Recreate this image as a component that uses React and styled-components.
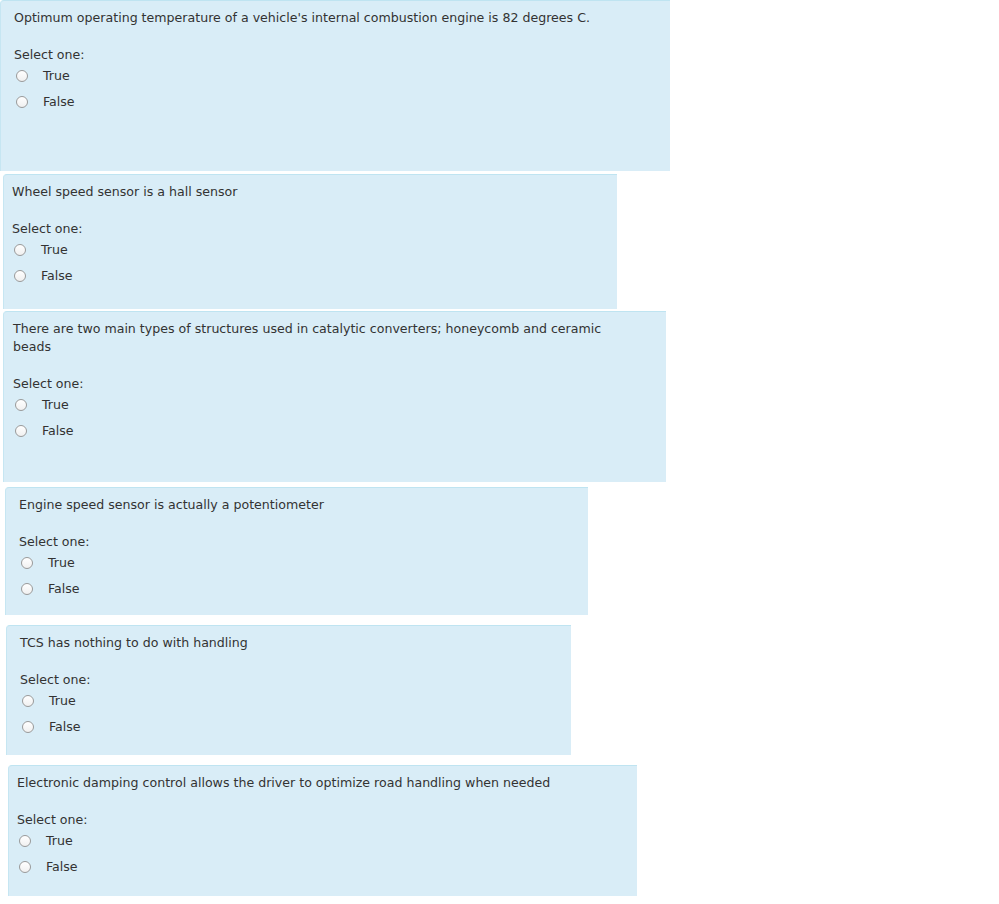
import React from 'react'
import styled, { createGlobalStyle } from 'styled-components'

const GlobalStyle = createGlobalStyle`
  html, body {
    margin: 0;
    padding: 0;
    background: #ffffff;
  }
  body {
    font-family: "DejaVu Sans", Verdana, sans-serif;
    font-size: 12.6px;
    color: #333333;
  }
`;

const Page = styled.div`
  display: flex;
  flex-direction: column;
  align-items: flex-start;
  width: 999px;
`;

const Card = styled.div`
  box-sizing: border-box;
  margin-top: ${({ $top }) => $top}px;
  margin-left: ${({ $left }) => $left}px;
  width: ${({ $width }) => $width}px;
  height: ${({ $height }) => $height}px;
  padding: 8px ${({ $pad }) => $pad}px 0;
  background: #d9edf7;
  border-top: 1px solid #bfe4f1;
  border-left: 1px solid #c6e6f2;
  border-radius: 4px 0 0 0;
  display: flex;
  flex-direction: column;
`;

const Question = styled.div`
  line-height: 18px;
  max-width: 610px;
`;

const Prompt = styled.div`
  margin-top: 19px;
  line-height: 18px;
`;

const Options = styled.div`
  display: flex;
  flex-direction: column;
  gap: 8px;
  margin-top: 3px;
`;

const Option = styled.label`
  display: flex;
  align-items: center;
  height: 18px;
  line-height: 18px;
`;

const Radio = styled.span`
  box-sizing: border-box;
  width: 12px;
  height: 12px;
  margin-left: 2px;
  margin-right: 15px;
  border-radius: 50%;
  border: 1px solid #9a9a9a;
  background: linear-gradient(#ffffff, #f0f0f0);
`;

const questions = [
  { text: "Optimum operating temperature of a vehicle's internal combustion engine is 82 degrees C.", top: 0, left: 0, width: 670, height: 171, pad: 13 },
  { text: 'Wheel speed sensor is a hall sensor', top: 3, left: 3, width: 614, height: 135, pad: 8 },
  { text: 'There are two main types of structures used in catalytic converters; honeycomb and ceramic beads', top: 2, left: 3, width: 663, height: 171, pad: 9 },
  { text: 'Engine speed sensor is actually a potentiometer', top: 5, left: 5, width: 583, height: 128, pad: 13 },
  { text: 'TCS has nothing to do with handling', top: 10, left: 6, width: 565, height: 130, pad: 13 },
  { text: 'Electronic damping control allows the driver to optimize road handling when needed', top: 10, left: 8, width: 629, height: 131, pad: 8 },
];

export default function App() {
  return (
    <>
      <GlobalStyle />
      <Page>
        {questions.map((q, i) => (
          <Card key={i} $top={q.top} $left={q.left} $width={q.width} $height={q.height} $pad={q.pad}>
            <Question>{q.text}</Question>
            <Prompt>Select one:</Prompt>
            <Options>
              <Option><Radio />True</Option>
              <Option><Radio />False</Option>
            </Options>
          </Card>
        ))}
      </Page>
    </>
  )
}
